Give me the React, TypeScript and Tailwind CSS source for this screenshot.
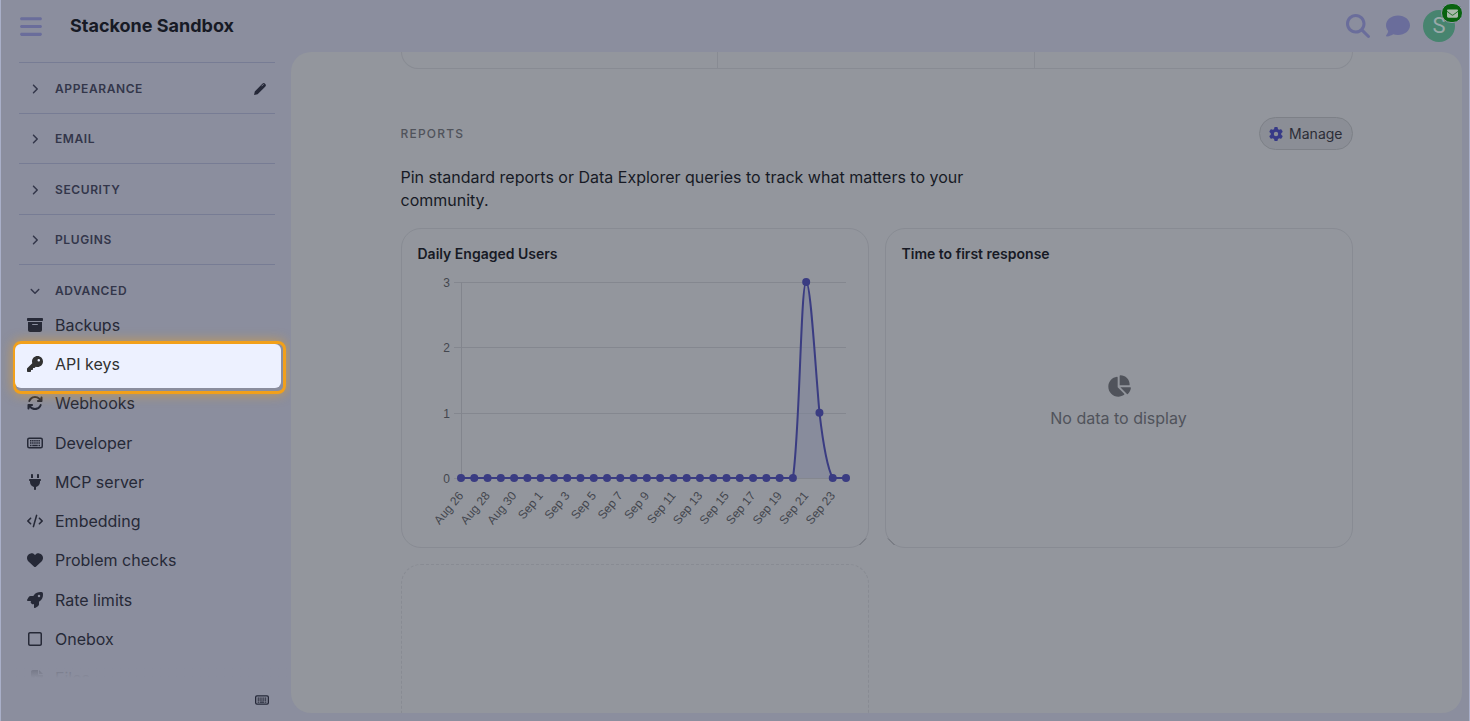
import type { ReactNode } from 'react';
import {
  FaAngleDown,
  FaAngleRight,
  FaArrowsRotate,
  FaBars,
  FaBoxArchive,
  FaChartPie,
  FaCode,
  FaComment,
  FaEnvelope,
  FaFileImport,
  FaGear,
  FaHeart,
  FaKey,
  FaMagnifyingGlass,
  FaPlug,
  FaRegSquare,
  FaRocket,
} from 'react-icons/fa6';

const PencilIcon = () => (
  <svg viewBox="0 0 14 14" className="size-[14px]" fill="none">
    <path d="M1 13l.8-3.6L9.6 1.6q1.2-1.1 2.2-.1l.7.7q1 1.1-.1 2.2L4.6 12.2z" fill="currentColor" />
    <path d="M8.6 4.2l2-2" stroke="#8b8e9e" strokeWidth="0.8" />
  </svg>
);

const KeyboardIcon = ({ className }: { className?: string }) => (
  <svg viewBox="0 0 16 16" className={className} fill="none" stroke="currentColor">
    <rect x="0.75" y="3.25" width="14.5" height="9.5" rx="1.5" strokeWidth="1.5" />
    <path d="M3 5.75h10M3 8h10" strokeWidth="1.5" strokeDasharray="1.5 0.6" />
    <path d="M3 10.5h1.5M5.25 10.5h5.5M11.5 10.5H13" strokeWidth="1.3" />
  </svg>
);

const sections = ['Appearance', 'Email', 'Security', 'Plugins'];

const links = [
  { label: 'Backups', icon: FaBoxArchive },
  { label: 'API keys', icon: FaKey, active: true },
  { label: 'Webhooks', icon: FaArrowsRotate },
  { label: 'Developer', icon: KeyboardIcon },
  { label: 'MCP server', icon: FaPlug },
  { label: 'Embedding', icon: FaCode },
  { label: 'Problem checks', icon: FaHeart },
  { label: 'Rate limits', icon: FaRocket },
  { label: 'Onebox', icon: FaRegSquare },
  { label: 'Files', icon: FaFileImport },
];

const Header = () => (
  <header className="flex h-[52px] items-center pl-[19px] pr-[14px]">
    <button aria-label="Toggle sidebar" className="text-[#6a6d9b]">
      <FaBars className="h-[25px] w-[22px]" />
    </button>
    <h1 className="ml-7 text-lg font-bold text-[#171a25]">Stackone Sandbox</h1>
    <div className="ml-auto flex items-center gap-4 text-[#6a6d9b]">
      <button aria-label="Search">
        <FaMagnifyingGlass className="size-6" />
      </button>
      <button aria-label="Chat">
        <FaComment className="size-6" />
      </button>
      <button
        aria-label="Account"
        className="relative -ml-[3px] flex size-8 items-center justify-center rounded-full bg-[#47846f] font-[Roboto] text-[22px] leading-none text-[#9aa9a9]"
      >
        S
        <span className="absolute -right-2 -top-[7px] flex h-5 w-[22px] items-center justify-center rounded-full border border-[#9297aa] bg-[#08630f] text-[#a9b9ac]">
          <FaEnvelope className="size-[11px]" />
        </span>
      </button>
    </div>
  </header>
);

const Sidebar = () => (
  <aside className="flex w-[289px] shrink-0 flex-col">
    <div className="relative mt-[10px] min-h-0 flex-1 overflow-hidden">
      <div className="ml-[18px] mr-[15px] grid h-[202px] grid-rows-4">
        {sections.map((name) => (
          <div key={name} className="flex items-center border-t border-[#777c94] pl-[10px] pr-2 pt-[2px]">
            <button className="flex items-center text-xs font-semibold uppercase tracking-wider text-[#33364a]">
              <FaAngleRight className="mr-[14px] size-3" />
              {name}
            </button>
            {name === 'Appearance' && (
              <button aria-label="Edit" className="ml-auto text-[#252838]">
                <PencilIcon />
              </button>
            )}
          </div>
        ))}
      </div>
      <div className="ml-[18px] mr-[15px] flex h-[41px] items-end border-t border-[#777c94] pb-[6px] pl-[10px]">
        <button className="flex items-center text-xs font-semibold uppercase tracking-wider text-[#33364a]">
          <FaAngleDown className="mr-[14px] size-3" />
          Advanced
        </button>
      </div>
      <ul className="grid h-[393px] grid-rows-10">
        {links.map(({ label, icon: Icon, active }) => (
          <li key={label} className={active ? 'relative' : ''}>
            {active && (
              <>
                <span className="pointer-events-none absolute -bottom-[10px] -top-[3px] left-3 right-1 rounded-lg border-[3px] border-[#f2a01a] shadow-[0_0_12px_rgba(240,161,30,0.6)]" />
                <span className="absolute -bottom-1 top-0 left-[14px] right-[9px] rounded-md bg-[#edf1ff]" />
              </>
            )}
            <a
              href="#"
              className={`flex h-full items-center gap-3 pl-[26px] text-base ${
                active ? 'relative text-[#313131]' : 'text-[#262937]'
              }`}
            >
              <Icon className="size-4" />
              {label}
            </a>
          </li>
        ))}
      </ul>
      <div className="pointer-events-none absolute inset-x-0 bottom-0 h-6 bg-gradient-to-b from-[#8b8e9e]/0 via-[#8b8e9e]/70 to-[#8b8e9e]" />
    </div>
    <div className="flex h-[43px] items-center justify-end pr-[21px] text-[#252838]">
      <button aria-label="Keyboard shortcuts">
        <KeyboardIcon className="size-[14px]" />
      </button>
    </div>
  </aside>
);

const DAYS = 30;
const LEFT = 43;
const BASE = 214;
const STEP_X = 385 / (DAYS - 1);
const STEP_Y = 196 / 3;

const values = Array.from({ length: DAYS }, (_, i) => (i === 26 ? 3 : i === 27 ? 1 : 0));
const points = values.map((v, i) => ({ x: LEFT + i * STEP_X, y: BASE - v * STEP_Y }));
const dates = values.map((_, i) => (i < 6 ? `Aug ${26 + i}` : `Sep ${i - 5}`));

const buildCurve = () => {
  const [a, b, c, d] = points.slice(25, 29);
  const third = STEP_X / 3;
  return [
    `M${a.x} ${a.y}`,
    `C${a.x + 7} ${a.y - 46} ${b.x - third - 1} ${b.y} ${b.x} ${b.y}`,
    `C${b.x + third} ${b.y} ${c.x - third} ${c.y - 50} ${c.x} ${c.y}`,
    `C${c.x + third} ${c.y + 38} ${d.x - third} ${d.y - 8} ${d.x} ${d.y}`,
  ].join(' ');
};

const EngagedUsersChart = () => (
  <svg viewBox="0 0 434 274" className="block w-full" role="img" aria-label="Daily Engaged Users">
    {[0, 1, 2, 3].map((n) => {
      const y = Math.round(BASE - n * STEP_Y) + 0.5;
      return (
        <g key={n}>
          <line x1={LEFT - 7} x2={LEFT + 385} y1={y} y2={y} stroke="#84878f" />
          <text x={LEFT - 11} y={y + 4} textAnchor="end" fontSize="12" fill="#43464e" fontFamily="Liberation Sans, sans-serif">
            {n}
          </text>
        </g>
      );
    })}
    <line x1={LEFT + 0.5} x2={LEFT + 0.5} y1={BASE - 196} y2={BASE} stroke="#82858d" />
    <path d={buildCurve()} fill="#7f859a" fillOpacity="0.55" />
    <path
      d={`M${points[0].x} ${BASE} L${points[25].x} ${BASE} ${buildCurve().replace('M', 'L')} L${points[29].x} ${BASE}`}
      fill="none"
      stroke="#3a3c82"
      strokeWidth="2"
    />
    {points.map((p, i) => (
      <circle key={i} cx={p.x} cy={p.y} r="4" fill="#3a3c82" />
    ))}
    {dates.map((date, i) =>
      i % 2 === 0 ? (
        <text
          key={date}
          transform={`translate(${points[i].x + 3} ${BASE + 18}) rotate(-50)`}
          textAnchor="end"
          fontSize="12"
          fill="#43464e"
          fontFamily="Liberation Sans, sans-serif"
        >
          {date}
        </text>
      ) : null
    )}
  </svg>
);

const ReportCard = ({ title, handle, children }: { title: string; handle: 'left' | 'right'; children: ReactNode }) => (
  <article className="relative flex h-80 flex-col rounded-[20px] border border-[#888b93] px-4 pt-[15px]">
    <h3 className="text-sm font-semibold leading-5 text-[#171a25]">{title}</h3>
    {children}
    <svg
      viewBox="0 0 10 10"
      className={`absolute bottom-[1px] size-[10px] ${handle === 'right' ? 'right-[1px]' : 'left-[1px] -scale-x-100'}`}
      fill="none"
      stroke="#6a6d75"
    >
      <path d="M2.5 9L9 2.5" />
    </svg>
  </article>
);

const Dashboard = () => (
  <main className="mb-2 ml-[1px] mr-[7px] min-w-0 flex-1 overflow-hidden rounded-[20px] bg-[#93969d] px-6">
    <div className="mx-auto max-w-[952px]">
      <div className="grid h-[17px] grid-cols-3 divide-x divide-[#888b93] overflow-hidden rounded-b-[20px] border border-t-0 border-[#888b93]">
        <div />
        <div />
        <div />
      </div>
      <div className="mt-12 flex items-center justify-between">
        <h2 className="text-xs font-medium uppercase tracking-widest text-[#50535b]">Reports</h2>
        <button className="flex h-[33px] items-center gap-[6px] rounded-full border border-[#7d8087] bg-[#8b8e96] px-[9px] text-sm text-[#2b2d36]">
          <FaGear className="size-[14px] text-[#373a87]" />
          Manage
        </button>
      </div>
      <p className="mt-4 max-w-[576px] text-base leading-[23px] text-[#171a25]">
        Pin standard reports or Data Explorer queries to track what matters to your community.
      </p>
      <div className="mt-4 grid grid-cols-2 gap-4">
        <ReportCard title="Daily Engaged Users" handle="right">
          <EngagedUsersChart />
        </ReportCard>
        <ReportCard title="Time to first response" handle="left">
          <div className="flex flex-1 flex-col items-center justify-center gap-2 pb-2 text-[#50535b]">
            <FaChartPie className="size-6" />
            <p>No data to display</p>
          </div>
        </ReportCard>
        <div className="h-80 rounded-[20px] border border-dashed border-[#888b93]" />
      </div>
    </div>
  </main>
);

export default function App() {
  return (
    <div className="flex h-screen flex-col overflow-hidden border-x border-[#a9afc8] bg-[#8b8e9e] font-[Inter,sans-serif]">
      <Header />
      <div className="flex min-h-0 flex-1">
        <Sidebar />
        <Dashboard />
      </div>
    </div>
  );
}
